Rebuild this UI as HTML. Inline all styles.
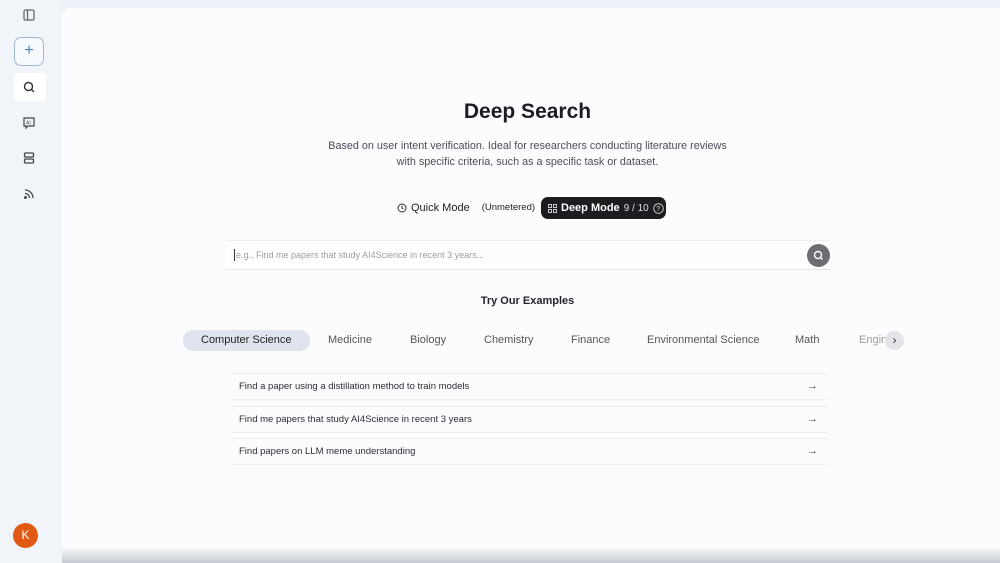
<!DOCTYPE html>
<html><head><meta charset="utf-8"><style>
*{box-sizing:border-box;margin:0;padding:0}
body{width:1000px;height:563px;overflow:hidden;background:#eef2f8;font-family:"Liberation Sans",Arial,sans-serif;color:#1f2329;position:relative}
.side{position:absolute;left:0;top:0;width:62px;height:563px;background:#f1f4f9}
.ico{position:absolute;left:19px;width:20px;height:20px}
.main{position:absolute;left:62px;top:8px;width:938px;height:546px;background:#fcfcfe;border-radius:8px 0 0 8px}
.bot{position:absolute;left:62px;top:546px;width:938px;height:17px;background:linear-gradient(#fcfcfe,#d8dbe0 70%,#c5c9cf)}
.abs{position:absolute}
h1{position:absolute;left:0;width:1055px;top:100px;text-align:center;font-size:21px;font-weight:bold;color:#1a1d22}
.desc{position:absolute;left:0;width:1055px;top:138px;text-align:center;font-size:10.8px;line-height:16px;color:#4a4f57}
.tab{position:absolute;top:340px;font-size:11px;color:#555;transform:translateY(-50%)}
.row{position:absolute;left:232px;width:596px;height:27px;border-top:1px solid #eceef2;border-bottom:1px solid #eceef2;font-size:9.5px;color:#2a2d33;display:flex;align-items:center;padding-left:7px}
.row span{position:absolute;right:10px;top:6px;font-size:11px;line-height:12px;color:#444}
</style></head><body>
<div class="side">
<svg class="ico" style="top:5px" viewBox="0 0 20 20" fill="none" stroke="#666" stroke-width="1.3"><rect x="5" y="5" width="10" height="10" rx="1.5"/><line x1="8.5" y1="5" x2="8.5" y2="15"/></svg>
<div class="abs" style="left:14px;top:37px;width:30px;height:29px;border:1px solid #9fb6d4;border-radius:7px;background:#f6f9fd;text-align:center;line-height:26px;font-size:16px;color:#4b7fbf">+</div>
<div class="abs" style="left:14px;top:73px;width:32px;height:28px;background:#fff;border-radius:4px"></div>
<svg class="ico" style="top:77px" viewBox="0 0 20 20" fill="none" stroke="#333" stroke-width="1.4"><circle cx="9.5" cy="9.5" r="4"/><line x1="12.5" y1="12.5" x2="15" y2="15"/></svg>
<svg class="ico" style="top:113px" viewBox="0 0 20 20" fill="none" stroke="#444" stroke-width="1.2"><path d="M5 5h10v8H9l-2 2v-2H5z"/><text x="7" y="11.5" font-size="5" fill="#444" stroke="none" font-family="Liberation Sans">AI</text></svg>
<svg class="ico" style="top:148px" viewBox="0 0 20 20" fill="none" stroke="#444" stroke-width="1.3"><rect x="5.5" y="5" width="9" height="4" rx="1"/><rect x="5.5" y="11" width="9" height="4" rx="1"/></svg>
<svg class="ico" style="top:184px" viewBox="0 0 20 20" fill="none" stroke="#444" stroke-width="1.3"><circle cx="6.5" cy="13.5" r=".8" fill="#444"/><path d="M6 9.5a4.5 4.5 0 0 1 4.5 4.5M6 6a8 8 0 0 1 8 8"/></svg>
<div class="abs" style="left:13px;top:523px;width:25px;height:25px;border-radius:50%;background:#e05a14;color:#fff;text-align:center;line-height:25px;font-size:12px">K</div>
</div>
<div class="main"></div>
<div class="bot"></div>
<h1>Deep Search</h1>
<div class="desc">Based on user intent verification. Ideal for researchers conducting literature reviews<br>with specific criteria, such as a specific task or dataset.</div>
<div class="abs" style="left:397px;top:201px;height:13px;font-size:11px;color:#222;display:flex;align-items:center;gap:4px">
<svg width="10" height="10" viewBox="0 0 10 10" fill="none" stroke="#333" stroke-width="1"><circle cx="5" cy="5" r="4"/><path d="M5 2.5V5l1.5 1"/></svg>Quick Mode <span style="font-size:9.5px;margin-left:8px">(Unmetered)</span></div>
<div class="abs" style="left:541px;top:197px;width:125px;height:22px;border-radius:7px;background:#1b1d21;color:#fff;font-size:11px;padding-left:7px;display:flex;align-items:center;gap:4px">
<svg width="9" height="9" viewBox="0 0 9 9" fill="none" stroke="#ddd" stroke-width=".9"><rect x=".5" y=".5" width="3" height="3"/><rect x="5.5" y=".5" width="3" height="3"/><rect x=".5" y="5.5" width="3" height="3"/><rect x="5.5" y="5.5" width="3" height="3"/></svg><span style="font-weight:bold">Deep Mode</span><span style="font-size:10px;color:#ddd">9 / 10</span>
<svg width="11" height="11" viewBox="0 0 11 11" fill="none" stroke="#ddd" stroke-width=".9"><circle cx="5.5" cy="5.5" r="4.8"/><text x="3.3" y="8" font-size="7" fill="#ddd" stroke="none" font-family="Liberation Sans">?</text></svg></div>
<div class="abs" style="left:226px;top:240px;width:605px;height:30px;border-top:1px solid #eef0f3;border-bottom:1px solid #e4e6ea;background:#fefefe"></div>
<div class="abs" style="left:234px;top:249px;font-size:9px;color:#9a9ea6;border-left:1px solid #333;padding-left:1px;line-height:12px">e.g., Find me papers that study AI4Science in recent 3 years...</div>
<div class="abs" style="left:807px;top:244px;width:23px;height:23px;border-radius:50%;background:#6b6d71"></div>
<svg class="abs" style="left:812px;top:249px" width="13" height="13" viewBox="0 0 13 13" fill="none" stroke="#fff" stroke-width="1.4"><circle cx="6" cy="6" r="3.5"/><line x1="8.5" y1="8.5" x2="10.5" y2="10.5"/></svg>
<div class="abs" style="left:0;width:1055px;top:295px;text-align:center;font-size:11px;font-weight:bold;color:#1f2329">Try Our Examples</div>
<div class="abs" style="left:183px;top:330px;width:127px;height:21px;border-radius:10px;background:#dfe4ee"></div>
<div class="tab" style="left:201px;color:#222">Computer Science</div>
<div class="tab" style="left:328px">Medicine</div>
<div class="tab" style="left:410px">Biology</div>
<div class="tab" style="left:484px">Chemistry</div>
<div class="tab" style="left:571px">Finance</div>
<div class="tab" style="left:647px">Environmental Science</div>
<div class="tab" style="left:795px">Math</div>
<div class="tab" style="left:859px;color:#999">Engin</div>
<div class="abs" style="left:885px;top:331px;width:19px;height:19px;border-radius:50%;background:#e2e4e9;text-align:center;line-height:18px;font-size:12px;color:#333">›</div>
<div class="row" style="top:373px">Find a paper using a distillation method to train models<span>→</span></div>
<div class="row" style="top:406px">Find me papers that study AI4Science in recent 3 years<span>→</span></div>
<div class="row" style="top:438px">Find papers on LLM meme understanding<span>→</span></div>
</body></html>
